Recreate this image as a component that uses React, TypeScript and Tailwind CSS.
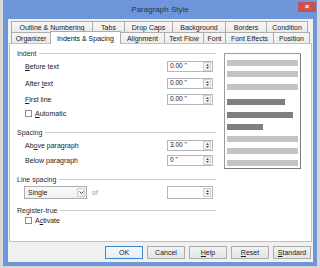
import React from "react";

const ROW1 = [
  { label: "Outline & Numbering", w: "w-[82px]" },
  { label: "Tabs", w: "w-[33px]" },
  { label: "Drop Caps", w: "w-[49px]" },
  { label: "Background", w: "w-[54px]" },
  { label: "Borders", w: "w-[42px]" },
  { label: "Condition", w: "w-[42px]" },
];

const ROW2 = [
  { label: "Organizer", w: "w-[40px]" },
  { label: "Indents & Spacing", w: "w-[71px]", active: true },
  { label: "Alignment", w: "w-[45px]" },
  { label: "Text Flow", w: "w-[40px]" },
  { label: "Font", w: "w-[23px]" },
  { label: "Font Effects", w: "w-[49px]" },
  { label: "Position", w: "w-[37px]" },
];

/* preview bars: light = surrounding paragraphs, dark = current one */
const BARS = [
  { mt: "mt-0", w: "w-full", dark: false },
  { mt: "mt-[5px]", w: "w-full", dark: false },
  { mt: "mt-[7px]", w: "w-full", dark: false },
  { mt: "mt-[9px]", w: "w-[58px]", dark: true },
  { mt: "mt-[7px]", w: "w-[66px]", dark: true },
  { mt: "mt-[6px]", w: "w-[36px]", dark: true },
  { mt: "mt-[6px]", w: "w-full", dark: false },
  { mt: "mt-[6px]", w: "w-full", dark: false },
  { mt: "mt-[6px]", w: "w-full", dark: false },
];

function Spin() {
  return (
    <div className="w-[8px] h-[9px] border border-[#cfcfcf] bg-[#f3f3f3] flex flex-col items-center justify-center gap-[1px]">
      <svg width="3" height="2" viewBox="0 0 3 2">
        <path d="M0 2L1.5 0L3 2Z" fill="#555" />
      </svg>
      <svg width="3" height="2" viewBox="0 0 3 2">
        <path d="M0 0L1.5 2L3 0Z" fill="#555" />
      </svg>
    </div>
  );
}

function Field({ value }: { value: string }) {
  return (
    <div className="w-[46px] h-[11px] mr-[3px] border border-[#b4b6bb] bg-white flex items-center justify-between pl-[2px] pr-[1px]">
      <span className="text-[6.5px] text-[#222]">{value}</span>
      <Spin />
    </div>
  );
}

function Header({ label, mt }: { label: string; mt: string }) {
  return (
    <div className={`${mt} h-[10px] flex items-center`}>
      <span className="text-[#2a2a2a]">{label}</span>
      <div className="flex-1 h-px bg-[#cdcdcd] ml-[3px]" />
    </div>
  );
}

function Row({ mt, children, value }: { mt: string; children: React.ReactNode; value: string }) {
  return (
    <div className={`${mt} h-[11px] flex items-center justify-between pl-[8px]`}>
      <span>{children}</span>
      <Field value={value} />
    </div>
  );
}

function Check({ mt, children }: { mt: string; children: React.ReactNode }) {
  return (
    <div className={`${mt} h-[11px] flex items-center pl-[8px] gap-[3px]`}>
      <div className="w-[7px] h-[7px] border border-[#8c8c8c] bg-white" />
      <span>{children}</span>
    </div>
  );
}

export default function App() {
  return (
    <div
      className="w-[320px] h-[268px] bg-[#d8d8d8] overflow-hidden text-[7px] text-[#1a1a1a] leading-none"
      style={{ fontFamily: '"Liberation Sans", Arial, sans-serif' }}
    >
      <div className="ml-[3px] w-[314px] h-[266px] bg-[#6f96da] flex flex-col pl-[5px] pr-[4px] pb-[4px]">
        {/* Title bar */}
        <div className="h-[19px] shrink-0 flex items-center justify-center relative -ml-[5px] -mr-[4px]">
          <span className="text-[8px] text-[#2e3440]">Paragraph Style</span>
          <div className="absolute right-[1px] top-[2px] w-[18px] h-[10px] bg-[#c75252] flex items-center justify-center">
            <span className="text-white text-[8px] font-bold leading-none">×</span>
          </div>
        </div>

        <div className="flex-1 bg-[#f0f0f0] flex flex-col">
          {/* Tabs */}
          <div className="flex ml-[3px] mt-[2px] h-[11px]">
            {ROW1.map((t, i) => (
              <div
                key={t.label}
                className={`${t.w} ${i ? "-ml-px" : ""} h-[11px] shrink-0 flex items-center justify-center border border-b-0 border-[#acacac] bg-linear-to-b from-[#f8f8f8] to-[#eaeaea]`}
              >
                {t.label}
              </div>
            ))}
          </div>
          <div className="flex items-end ml-[3px] h-[11px]">
            {ROW2.map((t, i) =>
              t.active ? (
                <div
                  key={t.label}
                  className={`${t.w} -ml-px h-[13px] -mb-px shrink-0 relative z-10 flex items-center justify-center border border-b-0 border-[#acacac] bg-white text-[#111]`}
                >
                  {t.label}
                </div>
              ) : (
                <div
                  key={t.label}
                  className={`${t.w} ${i ? "-ml-px" : ""} h-[11px] shrink-0 flex items-center justify-center border border-b-0 border-[#acacac] bg-linear-to-b from-[#f8f8f8] to-[#eaeaea]`}
                >
                  {t.label}
                </div>
              )
            )}
          </div>

          {/* Panel */}
          <div className="mx-[1px] h-[199px] border border-[#c2c2c2] bg-white flex pl-[7px] pt-[4px]">
            <div className="w-[199px] flex flex-col">
              <Header label="Indent" mt="mt-0" />
              <Row mt="mt-[3px]" value={'0.00 "'}>
                <span className="underline">B</span>efore text
              </Row>
              <Row mt="mt-[6px]" value={'0.00 "'}>
                After <span className="underline">t</span>ext
              </Row>
              <Row mt="mt-[5px]" value={'0.00 "'}>
                <span className="underline">F</span>irst line
              </Row>
              <Check mt="mt-[3px]">
                <span className="underline">A</span>utomatic
              </Check>

              <Header label="Spacing" mt="mt-[8px]" />
              <Row mt="mt-[3px]" value={'3.00 "'}>
                Ab<span className="underline">o</span>ve paragraph
              </Row>
              <Row mt="mt-[4px]" value={'0 "'}>
                Below paragraph
              </Row>

              <Header label="Line spacing" mt="mt-[8px]" />
              <div className="mt-[2px] h-[13px] flex items-center pl-[7px]">
                <div className="w-[63px] h-[13px] border border-[#acacac] bg-linear-to-b from-[#fafafa] to-[#efefef] flex items-center justify-between pl-[3px] pr-[1px]">
                  <span>Single</span>
                  <div className="w-[8px] h-[9px] border border-[#cfcfcf] bg-[#f3f3f3] flex items-center justify-center">
                    <svg width="5" height="3" viewBox="0 0 5 3">
                      <path d="M0.5 0.5L2.5 2.5L4.5 0.5" stroke="#444" strokeWidth="1" fill="none" />
                    </svg>
                  </div>
                </div>
                <span className="ml-[5px] text-[#9a9a9a]">of</span>
                <div className="ml-auto w-[46px] h-[13px] mr-[3px] border border-[#b4b6bb] bg-white flex items-center justify-end pr-[1px]">
                  <Spin />
                </div>
              </div>

              <Header label="Register-true" mt="mt-[6px]" />
              <Check mt="mt-0">
                A<span className="underline">c</span>tivate
              </Check>
            </div>

            {/* Preview */}
            <div className="ml-[8px] mt-[5px] w-[77px] h-[116px] border border-[#9a9a9a] border-r-[#7c7c7c] border-b-[#7c7c7c] bg-white flex flex-col px-[2px] pt-[6px]">
              {BARS.map((b, i) => (
                <div key={i} className={`${b.mt} ${b.w} h-[6px] ${b.dark ? "bg-[#7f7f7f]" : "bg-[#c3c3c3]"}`} />
              ))}
            </div>
          </div>

          {/* Buttons */}
          <div className="mt-[4px] flex justify-end gap-[4px] pr-[2px]">
            <button className="w-[38px] h-[13px] border border-[#3d86cc] bg-linear-to-b from-[#f4f8fc] to-[#e3edf7] text-[7px] leading-none">
              OK
            </button>
            <button className="w-[38px] h-[13px] border border-[#acacac] bg-linear-to-b from-[#f2f2f2] to-[#e5e5e5] text-[7px] leading-none">
              Cancel
            </button>
            <button className="w-[38px] h-[13px] border border-[#acacac] bg-linear-to-b from-[#f2f2f2] to-[#e5e5e5] text-[7px] leading-none">
              <span className="underline">H</span>elp
            </button>
            <button className="w-[38px] h-[13px] border border-[#acacac] bg-linear-to-b from-[#f2f2f2] to-[#e5e5e5] text-[7px] leading-none">
              <span className="underline">R</span>eset
            </button>
            <button className="w-[38px] h-[13px] border border-[#acacac] bg-linear-to-b from-[#f2f2f2] to-[#e5e5e5] text-[7px] leading-none">
              <span className="underline">S</span>tandard
            </button>
          </div>
        </div>
      </div>
    </div>
  );
}
